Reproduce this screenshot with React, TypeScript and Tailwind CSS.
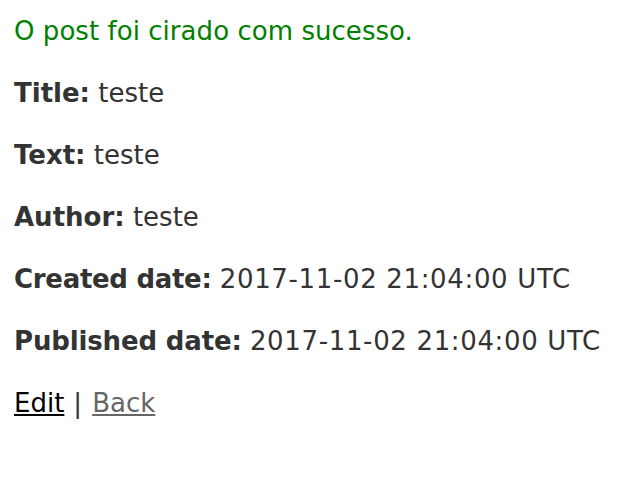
export default function App() {
  return (
    <div
      className="min-h-screen bg-white text-[#333] px-[14px] pt-[13px] text-[26px] leading-[36px] flex flex-col gap-[26px]"
      style={{ fontFamily: 'Verdana, "DejaVu Sans", sans-serif' }}
    >
      <p className="text-[#008000] tracking-[0.05px]">O post foi cirado com sucesso.</p>
      <p>
        <strong className="font-bold">Title:</strong> teste
      </p>
      <p>
        <strong className="font-bold">Text:</strong> teste
      </p>
      <p>
        <strong className="font-bold">Author:</strong> teste
      </p>
      <p>
        <strong className="font-bold tracking-[-0.3px]">Created date:</strong>{" "}
        <span className="tracking-[0.65px]">2017-11-02 21:04:00 UTC</span>
      </p>
      <p>
        <strong className="font-bold tracking-[-0.15px]">Published date:</strong>{" "}
        <span className="tracking-[0.65px]">2017-11-02 21:04:00 UTC</span>
      </p>
      <p>
        <a href="#" className="text-black underline">Edit</a>
        <span className="ml-[9px] mr-[10px]">|</span>
        <a href="#" className="text-[#666] underline">Back</a>
      </p>
    </div>
  );
}
